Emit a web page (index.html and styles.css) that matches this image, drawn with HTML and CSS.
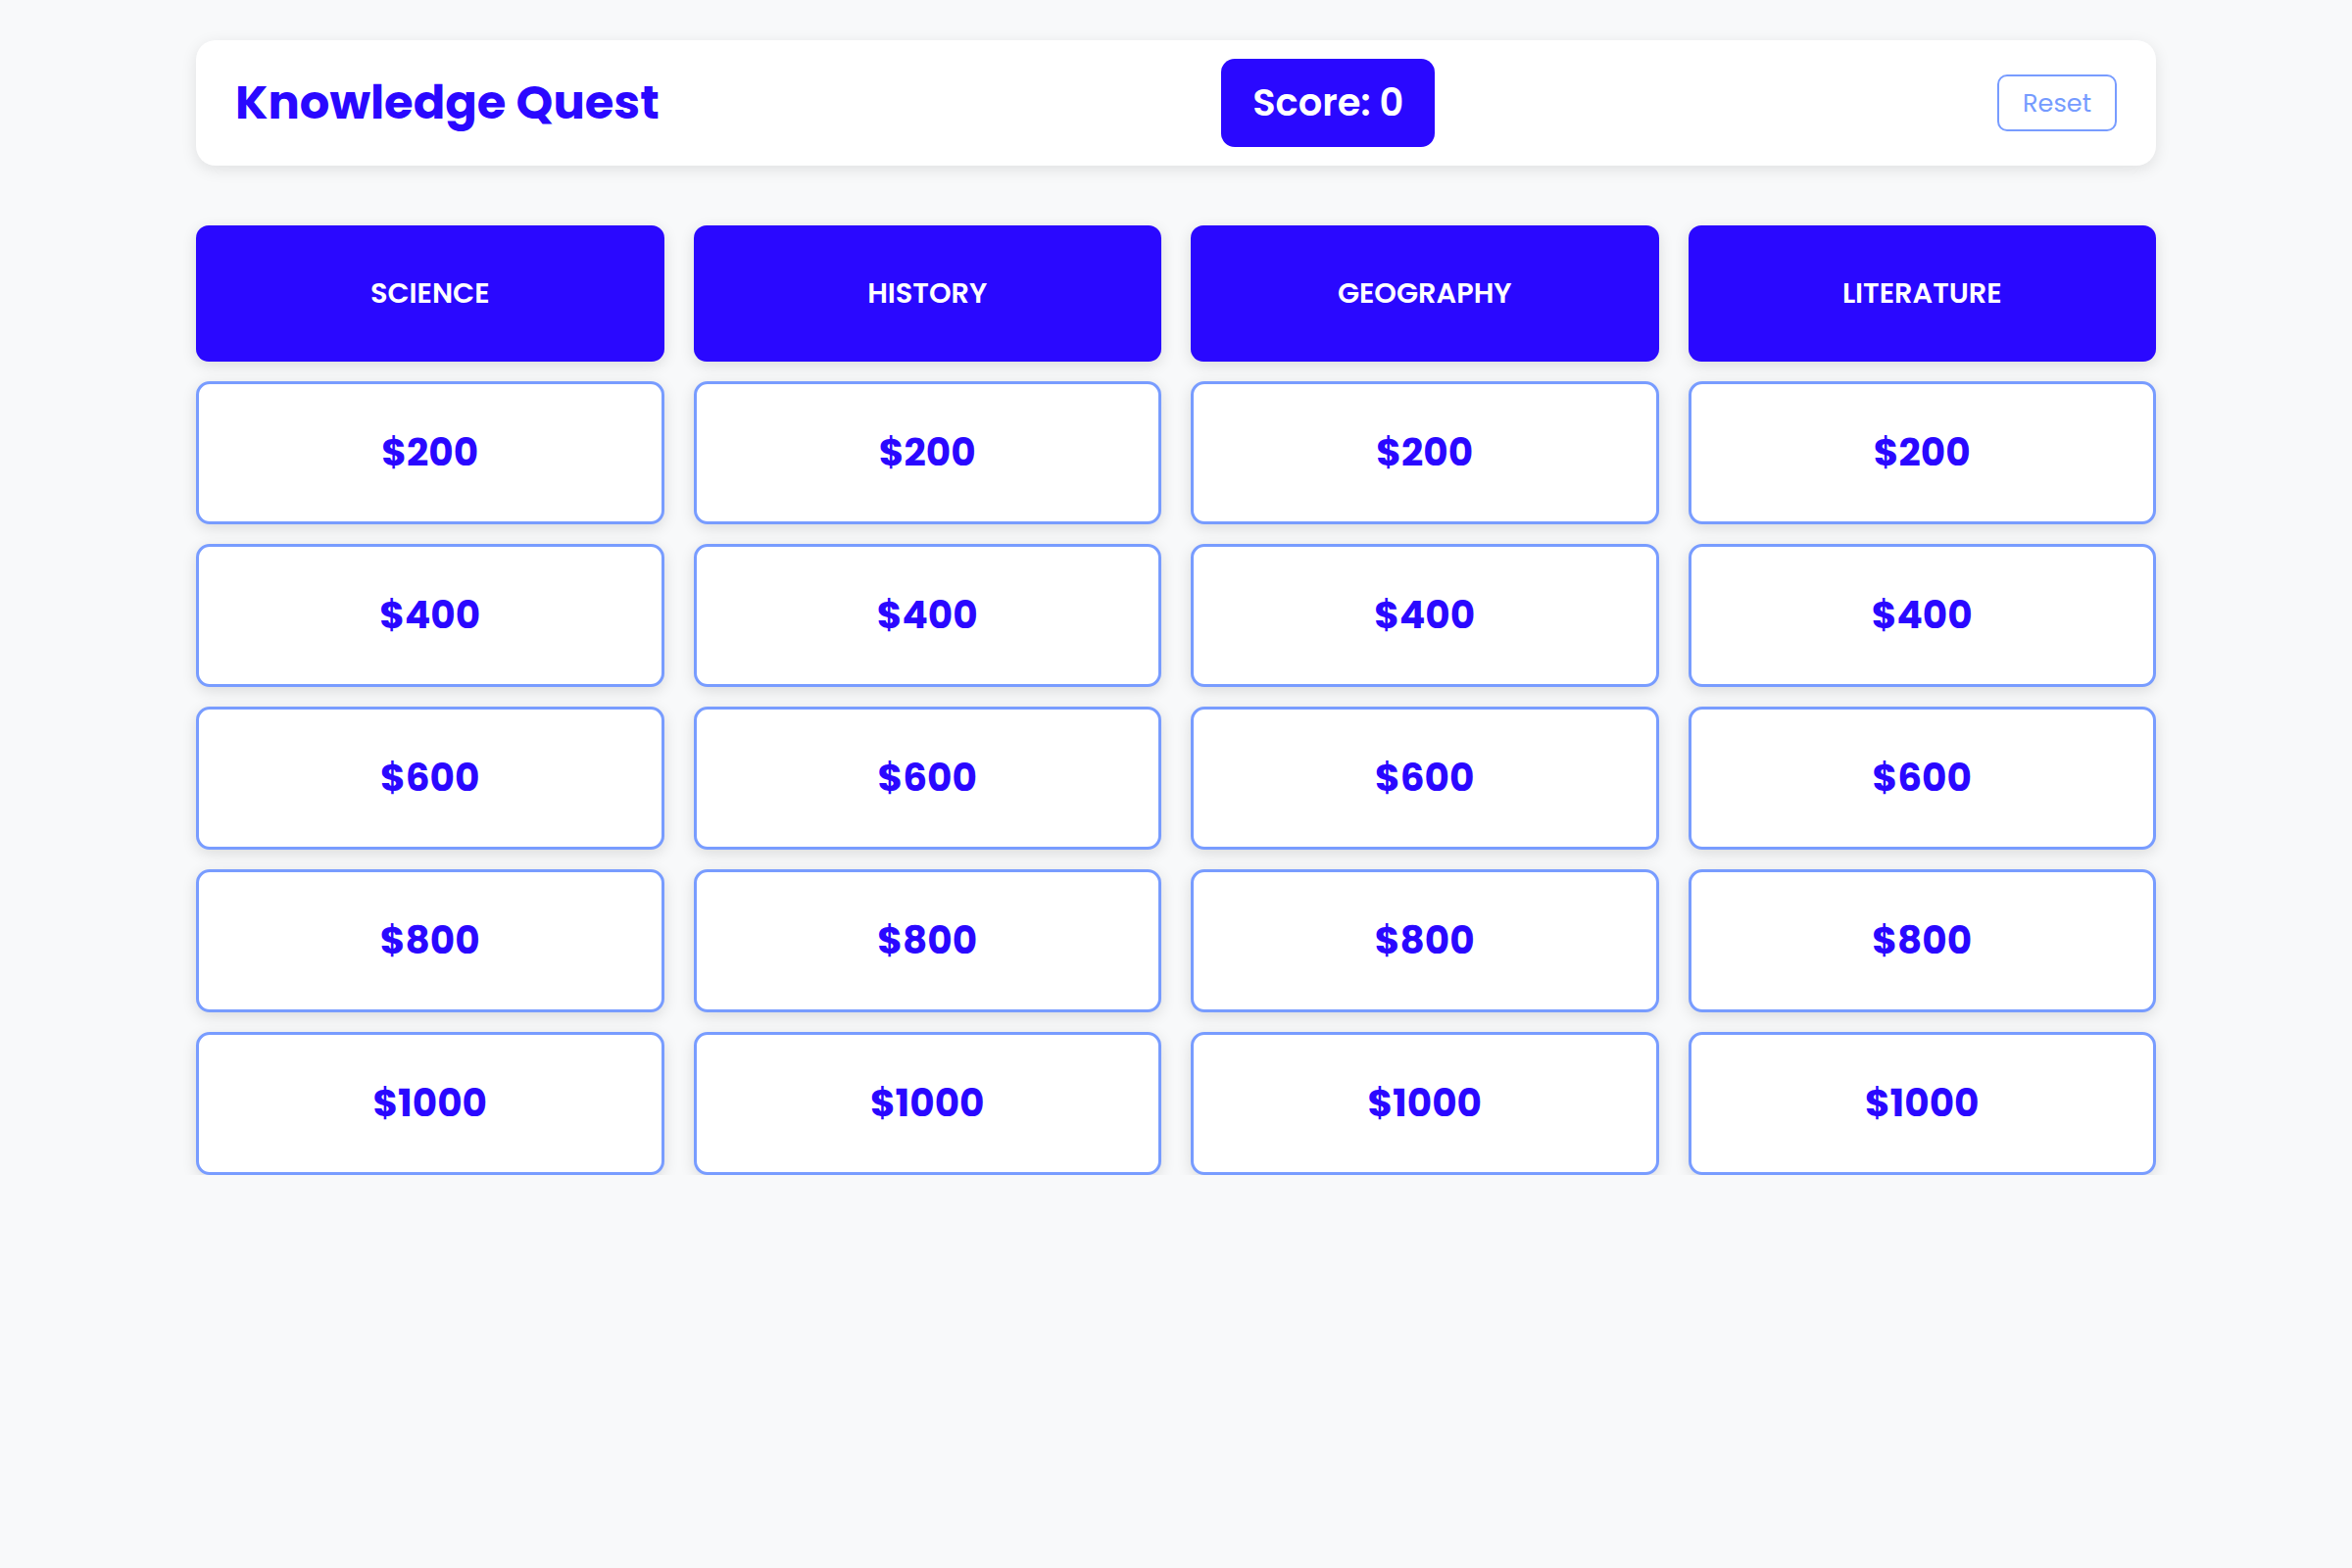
FILE: index.html
```html
<!DOCTYPE html>
<html lang="en">
<head>
    <meta charset="UTF-8">
    <meta name="viewport" content="width=device-width, initial-scale=1.0">
    <title>Knowledge Quest</title>
    <link rel="stylesheet" href="styles.css">
</head>
<body>
    <div class="app">
        <header class="top-bar">
            <h1 class="game-title">Knowledge Quest</h1>
            <div class="score-badge">Score: 0</div>
            <button class="reset-button">Reset</button>
        </header>

        <main class="board">
            <div class="category">Science</div>
            <div class="category">History</div>
            <div class="category">Geography</div>
            <div class="category">Literature</div>

            <button class="clue">$200</button>
            <button class="clue">$200</button>
            <button class="clue">$200</button>
            <button class="clue">$200</button>

            <button class="clue">$400</button>
            <button class="clue">$400</button>
            <button class="clue">$400</button>
            <button class="clue">$400</button>

            <button class="clue">$600</button>
            <button class="clue">$600</button>
            <button class="clue">$600</button>
            <button class="clue">$600</button>

            <button class="clue">$800</button>
            <button class="clue">$800</button>
            <button class="clue">$800</button>
            <button class="clue">$800</button>

            <button class="clue">$1000</button>
            <button class="clue">$1000</button>
            <button class="clue">$1000</button>
            <button class="clue">$1000</button>
        </main>
    </div>
</body>
</html>
```

FILE: styles.css
```css
* {
    box-sizing: border-box;
}
body {
    margin: 0;
    background-color: #f8f9fa;
    font-family: "Poppins", "Inter", sans-serif;
    color: #2a08ff;
}
.app {
    width: 2000px;
    margin: 0 auto;
    padding-top: 41px;
}
.top-bar {
    display: flex;
    align-items: center;
    justify-content: space-between;
    background: #ffffff;
    padding: 19px 40px;
    border-radius: 20px;
    box-shadow: 0 4px 16px rgba(0, 0, 0, 0.1);
    margin-bottom: 61px;
}
.game-title {
    margin: 0;
    font-size: 48px;
    font-weight: 700;
    line-height: 1.5;
    color: #2a08ff;
}
.score-badge {
    background: #2a08ff;
    color: #ffffff;
    font-size: 38.4px;
    font-weight: 600;
    line-height: 1.5;
    padding: 16px 32px;
    border-radius: 14px;
}
.reset-button {
    background: transparent;
    border: 2px solid #789cff;
    color: #759bff;
    font-family: inherit;
    font-size: 25.6px;
    line-height: 1.5;
    padding: 8px 24px;
    border-radius: 10px;
    cursor: pointer;
}
.board {
    display: grid;
    grid-template-columns: repeat(4, 1fr);
    column-gap: 30px;
    row-gap: 20px;
}
.category {
    background: #2a08ff;
    color: #ffffff;
    text-align: center;
    text-transform: uppercase;
    font-size: 28.8px;
    font-weight: 600;
    line-height: 43px;
    padding: 48px 20px;
    border-radius: 13px;
    box-shadow: 0 4px 15px rgba(0, 0, 0, 0.12);
}
.clue {
    background: #ffffff;
    border: 3px solid #789cff;
    border-radius: 14px;
    color: #2a08ff;
    font-family: inherit;
    font-size: 39px;
    font-weight: 700;
    line-height: 60px;
    padding: 40px 20px;
    cursor: pointer;
    box-shadow: 0 4px 15px rgba(0, 0, 0, 0.12);
}
```
